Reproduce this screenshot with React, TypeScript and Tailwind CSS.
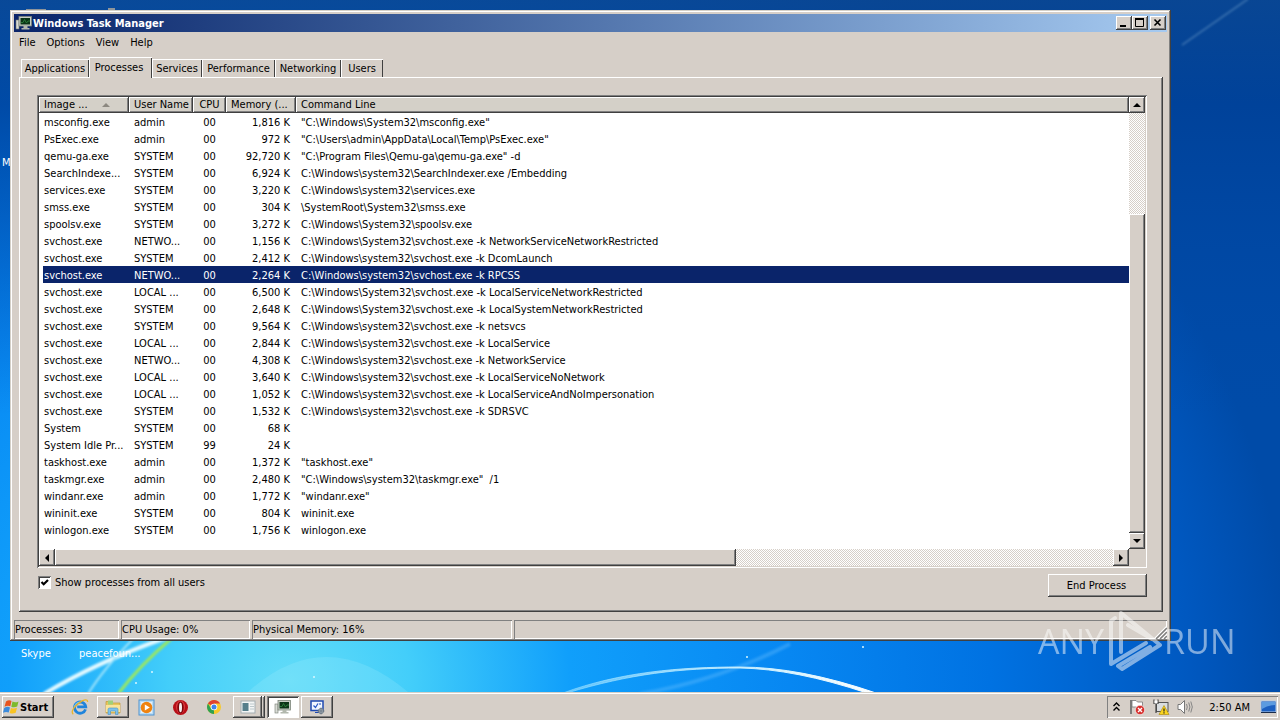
import { useState } from 'react';
import type { ReactNode } from 'react';

const raised = 'shadow-[inset_-1px_-1px_#404040,inset_1px_1px_#fff,inset_-2px_-2px_#808080]';
const sunken = 'shadow-[inset_1px_1px_#808080,inset_-1px_-1px_#fff,inset_2px_2px_#404040]';
const thinSunken = 'shadow-[inset_1px_1px_#808080,inset_-1px_-1px_#fff]';
const dither = 'bg-[repeating-conic-gradient(#ffffff_0_25%,#d6cfc8_0_50%)] bg-[length:2px_2px]';

const menus = ['File', 'Options', 'View', 'Help'];

const tabs = [
  { name: 'Applications', width: 'w-[68px]' },
  { name: 'Processes', width: 'w-[63px]' },
  { name: 'Services', width: 'w-[50px]' },
  { name: 'Performance', width: 'w-[73px]' },
  { name: 'Networking', width: 'w-[66px]' },
  { name: 'Users', width: 'w-[42px]' },
];

const processes = [
  ['msconfig.exe', 'admin', '00', '1,816 K', '"C:\\Windows\\System32\\msconfig.exe"'],
  ['PsExec.exe', 'admin', '00', '972 K', '"C:\\Users\\admin\\AppData\\Local\\Temp\\PsExec.exe"'],
  ['qemu-ga.exe', 'SYSTEM', '00', '92,720 K', '"C:\\Program Files\\Qemu-ga\\qemu-ga.exe" -d'],
  ['SearchIndexe...', 'SYSTEM', '00', '6,924 K', 'C:\\Windows\\system32\\SearchIndexer.exe /Embedding'],
  ['services.exe', 'SYSTEM', '00', '3,220 K', 'C:\\Windows\\system32\\services.exe'],
  ['smss.exe', 'SYSTEM', '00', '304 K', '\\SystemRoot\\System32\\smss.exe'],
  ['spoolsv.exe', 'SYSTEM', '00', '3,272 K', 'C:\\Windows\\System32\\spoolsv.exe'],
  ['svchost.exe', 'NETWO...', '00', '1,156 K', 'C:\\Windows\\System32\\svchost.exe -k NetworkServiceNetworkRestricted'],
  ['svchost.exe', 'SYSTEM', '00', '2,412 K', 'C:\\Windows\\system32\\svchost.exe -k DcomLaunch'],
  ['svchost.exe', 'NETWO...', '00', '2,264 K', 'C:\\Windows\\system32\\svchost.exe -k RPCSS'],
  ['svchost.exe', 'LOCAL ...', '00', '6,500 K', 'C:\\Windows\\System32\\svchost.exe -k LocalServiceNetworkRestricted'],
  ['svchost.exe', 'SYSTEM', '00', '2,648 K', 'C:\\Windows\\System32\\svchost.exe -k LocalSystemNetworkRestricted'],
  ['svchost.exe', 'SYSTEM', '00', '9,564 K', 'C:\\Windows\\system32\\svchost.exe -k netsvcs'],
  ['svchost.exe', 'LOCAL ...', '00', '2,844 K', 'C:\\Windows\\system32\\svchost.exe -k LocalService'],
  ['svchost.exe', 'NETWO...', '00', '4,308 K', 'C:\\Windows\\system32\\svchost.exe -k NetworkService'],
  ['svchost.exe', 'LOCAL ...', '00', '3,640 K', 'C:\\Windows\\system32\\svchost.exe -k LocalServiceNoNetwork'],
  ['svchost.exe', 'LOCAL ...', '00', '1,052 K', 'C:\\Windows\\system32\\svchost.exe -k LocalServiceAndNoImpersonation'],
  ['svchost.exe', 'SYSTEM', '00', '1,532 K', 'C:\\Windows\\system32\\svchost.exe -k SDRSVC'],
  ['System', 'SYSTEM', '00', '68 K', ''],
  ['System Idle Pr...', 'SYSTEM', '99', '24 K', ''],
  ['taskhost.exe', 'admin', '00', '1,372 K', '"taskhost.exe"'],
  ['taskmgr.exe', 'admin', '00', '2,480 K', '"C:\\Windows\\system32\\taskmgr.exe"  /1'],
  ['windanr.exe', 'admin', '00', '1,772 K', '"windanr.exe"'],
  ['wininit.exe', 'SYSTEM', '00', '804 K', 'wininit.exe'],
  ['winlogon.exe', 'SYSTEM', '00', '1,756 K', 'winlogon.exe'],
];

function Wallpaper() {
  return (
    <svg
      className="absolute inset-0 h-full w-full"
      viewBox="0 0 1280 692"
      preserveAspectRatio="none"
      aria-hidden="true"
    >
      <defs>
        <radialGradient id="glow" gradientUnits="userSpaceOnUse" cx="0" cy="0" r="1000" gradientTransform="translate(290 680) scale(1 0.85)">
          <stop offset="0" stopColor="#62dcf8" />
          <stop offset="0.12" stopColor="#43cefa" />
          <stop offset="0.28" stopColor="#109ffb" />
          <stop offset="0.5" stopColor="#0787f2" />
          <stop offset="0.7" stopColor="#0072e2" />
          <stop offset="0.9" stopColor="#0058c0" />
          <stop offset="1" stopColor="#004ba8" />
        </radialGradient>
        <linearGradient id="dusk" x1="0" y1="0" x2="0" y2="1">
          <stop offset="0" stopColor="#0a4590" stopOpacity="0.85" />
          <stop offset="0.15" stopColor="#003f95" stopOpacity="0.75" />
          <stop offset="0.6" stopColor="#0048a8" stopOpacity="0" />
        </linearGradient>
        <linearGradient id="arc" x1="560" y1="0" x2="880" y2="0" gradientUnits="userSpaceOnUse">
          <stop offset="0" stopColor="#8fdcff" stopOpacity="0.6" />
          <stop offset="0.7" stopColor="#d8f4ff" />
          <stop offset="1" stopColor="#ffffff" />
        </linearGradient>
        <filter id="soft">
          <feGaussianBlur stdDeviation="1" />
        </filter>
      </defs>
      <rect width="1280" height="692" fill="url(#glow)" />
      <rect width="1280" height="692" fill="url(#dusk)" />
      <path d="M248 692 Q325 622 408 692Z" fill="#b8f2ff" fillOpacity="0.18" />
      <g fill="#c9b79a" fillOpacity="0.7">
        <rect x="26" y="9" width="20" height="2" />
        <rect x="108" y="8" width="7" height="3" />
      </g>
      <g filter="url(#soft)" fill="none">
        <path d="M1182 45 L1248 -1" stroke="#7aa7d0" strokeOpacity="0.4" strokeWidth="2" />
        <path d="M44 694 Q95 663 165 638" stroke="#e2f9ff" strokeWidth="4" />
        <path d="M88 694 Q104 668 134 638" stroke="#9fe4fb" strokeWidth="2" />
        <path d="M118 694 Q140 665 172 638" stroke="#9be860" strokeWidth="3" />
        <path d="M640 694 Q720 680 790 644" stroke="#6fc3ff" strokeOpacity="0.35" strokeWidth="4" />
      </g>
      <path d="M563 693 C620 672 680 667 740 667 Q800 667 876 693 L867 693 Q795 669 740 668 C680 668 630 674 567 693Z" fill="url(#arc)" stroke="url(#arc)" />
      <g fill="#d9f7ff">
        <circle cx="136" cy="683" r="1" />
        <circle cx="152" cy="672" r="1" />
        <circle cx="314" cy="677" r="1" />
        <circle cx="747" cy="657" r="1" />
        <circle cx="863" cy="647" r="1" />
      </g>
    </svg>
  );
}

function TaskManagerIcon() {
  return (
    <svg width="18" height="16" viewBox="0 0 18 16" aria-hidden="true">
      <rect x="1" y="5" width="3" height="9" fill="#d9dcd6" stroke="#73796f" strokeWidth="0.6" />
      <rect x="4" y="1.5" width="12.5" height="9.5" fill="#c9cfc6" stroke="#7c8479" strokeWidth="0.8" />
      <rect x="5.5" y="3" width="9.5" height="6.5" fill="#0b3517" />
      <path d="M6 7.5h2l1.500-3 2 3.500 1.500-2h2" stroke="#2c7f3c" strokeWidth="0.9" fill="none" />
      <path d="M8.500 11h4v2h2v1.500h-8V13h2z" fill="#b2b8ad" />
    </svg>
  );
}

function StartLogo() {
  return (
    <svg width="17" height="16" viewBox="0 0 17 16" aria-hidden="true">
      <path d="M3 2.500Q6 .5 8.500 2L7.300 7.200Q4.500 6 1.500 7.800Z" fill="#e8541f" />
      <path d="M9.500 2.600Q12.500 4 15.500 2.400L14.200 7.500Q11 9 8.300 7.700Z" fill="#7dba2c" />
      <path d="M1.200 8.900Q4.300 7 7 8.400L5.700 13.500Q3 12.200 0 13.800Z" fill="#3c8bdc" />
      <path d="M8 8.900Q11 10.200 14 8.700L12.700 13.800Q9.500 15.200 6.700 13.900Z" fill="#f8c322" />
    </svg>
  );
}

function ExplorerLogo() {
  return (
    <svg width="18" height="18" viewBox="0 0 18 18" aria-hidden="true">
      <path d="M14.500 11.300A5.600 5.600 0 1 1 14.700 8.800H6.200" fill="none" stroke="#1f84dc" strokeWidth="2.8" />
      <path d="M3.400 10A5.600 5.600 0 0 1 9 4.200" fill="none" stroke="#6cc4f8" strokeWidth="1.2" />
      <path d="M2.300 16.200C-.8 13.800 3.500 8 8.500 4.600 12.600 1.800 17 .6 16.500 4" fill="none" stroke="#e9b52c" strokeWidth="1.3" />
    </svg>
  );
}

function FolderIcon() {
  return (
    <svg width="18" height="18" viewBox="0 0 18 18" aria-hidden="true">
      <path d="M2 3.500h5l1 1.500h8v10H2z" fill="#e8c65c" stroke="#c49a35" strokeWidth="0.7" />
      <path d="M4 2.500h5v4H4z" fill="#9fd07a" />
      <path d="M2 7h14v7H2z" fill="#fae49a" />
      <path d="M4 16.500v-5q0-1.500 1.500-1.500h7q1.500 0 1.500 1.500v5h-2.500V13h-5v3.500z" fill="#7dc1ea" stroke="#4790c4" strokeWidth="0.6" />
    </svg>
  );
}

function MediaPlayerIcon() {
  return (
    <svg width="17" height="17" viewBox="0 0 17 17" aria-hidden="true">
      <rect x="1" y="1" width="15" height="15" fill="#b9dcf5" stroke="#4f93cf" />
      <rect x="3" y="3" width="11" height="11" fill="#e3f1fb" />
      <circle cx="8.5" cy="8.5" r="5.8" fill="#ef8310" />
      <path d="M6.800 5.400v6.200l5-3.100z" fill="#fff" />
    </svg>
  );
}

function OperaIcon() {
  return (
    <svg width="17" height="17" viewBox="0 0 17 17" aria-hidden="true">
      <circle cx="8.5" cy="8.5" r="7.5" fill="#b80f17" />
      <ellipse cx="8.5" cy="8" rx="4.6" ry="6.4" fill="#d8383c" />
      <ellipse cx="8.5" cy="8.5" rx="3.2" ry="6" fill="#7d060b" />
      <ellipse cx="8.5" cy="8.5" rx="1.5" ry="4.8" fill="#f4eeee" />
    </svg>
  );
}

function ChromeIcon() {
  return (
    <svg width="16" height="16" viewBox="0 0 16 16" aria-hidden="true">
      <circle cx="8" cy="8" r="7" fill="#f7c92b" />
      <path d="M8 8L1.940 4.500A7 7 0 0 1 14.060 4.500H8Z" fill="#e0402f" />
      <path d="M8 8L8 15A7 7 0 0 1 1.940 4.500L5 9.500Z" fill="#2fa150" />
      <circle cx="8" cy="8" r="3.3" fill="#fff" />
      <circle cx="8" cy="8" r="2.5" fill="#3f84ea" />
    </svg>
  );
}

function PanelIcon() {
  return (
    <svg width="16" height="14" viewBox="0 0 16 14" aria-hidden="true">
      <rect x="1" y="1" width="14" height="12" fill="#f3f5f5" stroke="#a3adb1" />
      <rect x="2.5" y="3" width="6" height="8" fill="#567f8c" />
      <path d="M10 4h4M10 6.500h4M10 9h4" stroke="#bcc8cc" />
    </svg>
  );
}

function ConfigIcon() {
  return (
    <svg width="17" height="17" viewBox="0 0 17 17" aria-hidden="true">
      <rect x="2" y="2" width="12" height="9.5" fill="#f2f7ff" stroke="#1e49b0" strokeWidth="1.5" />
      <path d="M4.500 6.500l2 2 2.500-4" fill="none" stroke="#2756c4" strokeWidth="1.2" />
      <path d="M10 5h2M6 13.500h4" stroke="#1e49b0" />
      <circle cx="12" cy="12" r="2.6" fill="#aab4bd" stroke="#66727e" strokeWidth="0.8" />
      <path d="M12 8.500v7M8.500 12h7" stroke="#66727e" strokeWidth="0.8" />
    </svg>
  );
}

function TrayFlag() {
  return (
    <svg width="18" height="18" viewBox="0 0 18 18" aria-hidden="true">
      <path d="M3 2v14" stroke="#666" strokeWidth="1.6" />
      <path d="M4 2.500h4l1.500 1.500h5v6h-5L8 9H4z" fill="#fff" stroke="#777" strokeWidth="0.8" />
      <circle cx="12" cy="12" r="4.7" fill="#d6302d" stroke="#fff" strokeWidth="0.6" />
      <path d="M10 10l4 4M14 10l-4 4" stroke="#fff" strokeWidth="1.4" />
    </svg>
  );
}

function TrayNetwork() {
  return (
    <svg width="18" height="18" viewBox="0 0 18 18" aria-hidden="true">
      <rect x="4.5" y="4.5" width="11.5" height="9" fill="#d9dde0" stroke="#555" />
      <path d="M2 1.500v4h4v-4M4 5.500V15" fill="none" stroke="#444" strokeWidth="1.2" />
      <rect x="2.5" y="2.5" width="3" height="3" fill="#fff" />
      <path d="M12 7.500l5 9H7z" fill="#fbd51f" stroke="#a98500" strokeWidth="0.6" />
      <path d="M12 10.500v3M12 14.300v1.200" stroke="#222" strokeWidth="1.2" />
    </svg>
  );
}

function TraySpeaker() {
  return (
    <svg width="18" height="18" viewBox="0 0 18 18" aria-hidden="true">
      <path d="M2 6.500h2.500l4-4v13l-4-4H2z" fill="#fff" stroke="#777" />
      <path d="M10.500 6q1.500 3 0 6M12.700 4.500q2.500 4.500 0 9M14.800 3.500q3 5.500 0 11" fill="none" stroke="#858585" />
    </svg>
  );
}

function ScrollArrow({ label, d, className }: { label: string; d: string; className: string }) {
  return (
    <button aria-label={label} className={`flex shrink-0 items-center justify-center bg-[#d6cfc8] ${raised} ${className}`}>
      <svg width="8" height="8" viewBox="0 0 8 8" aria-hidden="true">
        <path d={d} fill="#000" />
      </svg>
    </button>
  );
}

function TitleButton({ label, children }: { label: string; children: ReactNode }) {
  return (
    <button aria-label={label} className={`flex h-[14px] w-4 items-center justify-center bg-[#d6cfc8] ${raised}`}>
      <svg width="12" height="10" viewBox="0 0 12 10" fill="none" stroke="#000" aria-hidden="true">
        {children}
      </svg>
    </button>
  );
}

function ProcessTable() {
  const [selected, setSelected] = useState(9);
  const th = `h-4 p-0 px-[5px] bg-[#d4d0c8] font-normal leading-4 ${raised}`;

  return (
    <table className="w-full table-fixed border-separate border-spacing-0 whitespace-pre">
      <colgroup>
        <col className="w-[90px]" />
        <col className="w-16" />
        <col className="w-[33px]" />
        <col className="w-[70px]" />
        <col />
      </colgroup>
      <thead>
        <tr className="text-left">
          <th className={th}>
            <span className="flex items-center gap-[14px]">
              Image ...
              <svg width="8" height="4" viewBox="0 0 8 4" aria-hidden="true">
                <path d="M0 4L4 0l4 4z" fill="#8c8880" />
              </svg>
            </span>
          </th>
          <th className={th}>User Name</th>
          <th className={`${th} text-center`}>CPU</th>
          <th className={th}>Memory (...</th>
          <th className={th}>Command Line</th>
        </tr>
      </thead>
      <tbody>
        {processes.map(([name, user, cpu, memory, command], index) => (
          <tr
            key={index}
            onClick={() => setSelected(index)}
            className={`h-[17px] leading-[15px] ${index === selected ? 'bg-[#0a246a] text-white' : ''}`}
          >
            <td className="border-l-4 border-white p-0 pt-[2px] pl-px">{name}</td>
            <td className="p-0 pt-[2px] pl-[5px]">{user}</td>
            <td className="p-0 pt-[2px] text-center">{cpu}</td>
            <td className="p-0 pt-[2px] pr-[6px] text-right">{memory}</td>
            <td className="p-0 pt-[2px] pl-[5px]">{command}</td>
          </tr>
        ))}
      </tbody>
    </table>
  );
}

function TaskManager() {
  const [activeTab, setActiveTab] = useState('Processes');

  return (
    <section className="relative bg-[#d6cfc8] px-1 pt-1 pb-[2px] text-black shadow-[inset_-1px_-1px_#404040,inset_1px_1px_#d4d0c8,inset_-2px_-2px_#808080,inset_2px_2px_#fff]">
      <header className="flex h-[18px] items-center bg-linear-to-r from-[#0a246a] to-[#a6caf0] pr-px pl-[1px]">
        <TaskManagerIcon />
        <h1 className="flex-1 font-bold text-white">Windows Task Manager</h1>
        <div className="flex">
          <TitleButton label="Minimize">
            <path d="M2 8h6" strokeWidth="2" />
          </TitleButton>
          <TitleButton label="Maximize">
            <path d="M1.500 1v7.500h8V1M1 1.500h9M1 .5h9" />
          </TitleButton>
          <div className="ml-[2px]">
            <TitleButton label="Close">
              <path d="M2.500 1.500l6 6M8.500 1.500l-6 6" strokeWidth="1.6" />
            </TitleButton>
          </div>
        </div>
      </header>

      <nav className="flex h-5 items-center gap-[11px] pl-[5px]">
        {menus.map((menu) => (
          <button key={menu}>{menu}</button>
        ))}
      </nav>

      <div role="tablist" className="flex h-[25px] items-end pl-[7px]">
        {tabs.map((tab) => (
          <button
            key={tab.name}
            role="tab"
            aria-selected={tab.name === activeTab}
            onClick={() => setActiveTab(tab.name)}
            className={`border-t border-l border-white shadow-[inset_-1px_0_#404040] ${tab.width} ${
              tab.name === activeTab ? 'relative z-10 -mb-px h-[21px] bg-[#d6cfc8] pr-1 pb-[2px]' : 'h-[18px] pr-px'
            }`}
          >
            {tab.name}
          </button>
        ))}
      </div>

      <div
        role="tabpanel"
        className="mr-1 ml-[5px] pt-[18px] pr-4 pb-[15px] pl-[18px] shadow-[inset_-1px_-1px_#404040,inset_1px_1px_#fff,inset_-2px_-2px_#808080]"
      >
        <div className={`grid grid-cols-[1fr_16px] grid-rows-[452px_17px] p-[2px] ${sunken}`}>
          <div className="overflow-hidden bg-white">
            <ProcessTable />
          </div>
          <div className={`flex flex-col ${dither}`}>
            <ScrollArrow label="Scroll up" d="M0 6l4-4 4 4z" className="h-4" />
            <div className="h-[101px]" />
            <div className={`flex-1 bg-[#d6cfc8] ${raised}`} />
            <ScrollArrow label="Scroll down" d="M0 2l4 4 4-4z" className="h-4" />
          </div>
          <div className={`flex ${dither}`}>
            <ScrollArrow label="Scroll left" d="M6 0L2 4l4 4z" className="w-4" />
            <div className={`w-5/8 bg-[#d6cfc8] ${raised}`} />
            <div className="flex-1" />
            <ScrollArrow label="Scroll right" d="M2 0l4 4-4 4z" className="w-4" />
          </div>
          <div className="bg-[#d6cfc8]" />
        </div>

        <div className="mt-[6px] flex h-[23px] items-center justify-between">
          <label className="flex items-center gap-1 pb-[6px] pl-px">
            <span className={`grid h-[13px] w-[13px] bg-white ${sunken}`}>
              <input type="checkbox" defaultChecked className="peer col-start-1 row-start-1 h-[13px] w-[13px] appearance-none" />
              <svg
                className="pointer-events-none col-start-1 row-start-1 hidden peer-checked:block"
                width="13"
                height="13"
                viewBox="0 0 13 13"
                aria-hidden="true"
              >
                <path d="M3.500 6l2.200 2.300L10 4" fill="none" stroke="#000" strokeWidth="2.2" />
              </svg>
            </span>
            Show processes from all users
          </label>
          <button className={`h-[23px] w-[99px] pr-[2px] ${raised}`}>End Process</button>
        </div>
      </div>

      <footer className="mt-2 flex h-[19px] gap-[2px] leading-[19px]">
        <span className={`w-[105px] pl-px ${thinSunken}`}>Processes: 33</span>
        <span className={`w-[129px] pl-px ${thinSunken}`}>CPU Usage: 0%</span>
        <span className={`w-[260px] pl-px ${thinSunken}`}>Physical Memory: 16%</span>
        <span className={`flex flex-1 items-end justify-end ${thinSunken}`}>
          <svg width="13" height="13" viewBox="0 0 13 13" aria-hidden="true">
            <path d="M0 13L13 0M4 13l9-9M8 13l5-5" stroke="#fff" strokeWidth="1.2" />
            <path d="M2 13L13 2M6 13l7-7M10 13l3-3" stroke="#808080" strokeWidth="1.5" />
          </svg>
        </span>
      </footer>
    </section>
  );
}

function Watermark() {
  return (
    <div className="pointer-events-none absolute right-12 bottom-[47px] z-20 flex h-16 w-[194px] items-center justify-between font-['Open_Sans',sans-serif] text-[34px] leading-none text-white opacity-50">
      <span>ANY</span>
      <svg
        className="shrink-0"
        width="60"
        height="64"
        viewBox="0 0 60 64"
        fill="none"
        stroke="#fff"
        strokeWidth="4"
        strokeLinejoin="round"
        strokeLinecap="round"
        aria-hidden="true"
      >
        <path d="M11 9L7 12V55L42 34" />
        <path d="M17 43V4L56 36L18 60L14 57L46 38" />
        <path d="M24 16L48 30" />
      </svg>
      <span>RUN</span>
    </div>
  );
}

function TaskbarButton({ label, active, children }: { label: string; active?: boolean; children: ReactNode }) {
  return (
    <button
      aria-label={label}
      className={`flex h-[22px] w-8 items-center justify-center ${active ? `bg-white ${sunken}` : raised}`}
    >
      {children}
    </button>
  );
}

function QuickLaunch({ label, children }: { label: string; children: ReactNode }) {
  return (
    <button aria-label={label} className="flex w-[34px] items-center justify-center">
      {children}
    </button>
  );
}

function Taskbar() {
  return (
    <footer className="relative flex h-7 items-center bg-[#d6cfc8] px-[2px] pt-[2px] text-black shadow-[inset_0_1px_#d4d0c8,inset_0_2px_#fff]">
      <button className={`mr-[9px] flex h-[22px] w-[52px] items-center pl-px font-bold ${raised}`}>
        <StartLogo />
        Start
      </button>
      <QuickLaunch label="Internet Explorer">
        <ExplorerLogo />
      </QuickLaunch>
      <TaskbarButton label="Windows Explorer">
        <FolderIcon />
      </TaskbarButton>
      <QuickLaunch label="Windows Media Player">
        <MediaPlayerIcon />
      </QuickLaunch>
      <QuickLaunch label="Opera">
        <OperaIcon />
      </QuickLaunch>
      <QuickLaunch label="Google Chrome">
        <ChromeIcon />
      </QuickLaunch>
      <div className={`mr-[2px] ml-[2px] flex pr-[3px] ${raised}`}>
        <button aria-label="Open windows" className={`flex h-[22px] w-[29px] items-center justify-center ${raised}`}>
          <PanelIcon />
        </button>
      </div>
      <div className="flex gap-[2px]">
        <TaskbarButton label="Windows Task Manager" active>
          <TaskManagerIcon />
        </TaskbarButton>
        <TaskbarButton label="System Configuration">
          <ConfigIcon />
        </TaskbarButton>
      </div>
      <div className={`ml-auto flex h-[22px] items-center pr-px pl-[6px] ${thinSunken}`}>
        <svg width="7" height="10" viewBox="0 0 7 10" fill="none" stroke="#000" strokeWidth="1.4" aria-hidden="true">
          <path d="M.5 4l3-3 3 3M.5 8.500l3-3 3 3" />
        </svg>
        <div className="mr-[15px] ml-2 flex gap-[6px]">
          <TrayFlag />
          <TrayNetwork />
          <TraySpeaker />
        </div>
        <time className="mr-[10px]">2:50 AM</time>
        <svg width="17" height="14" viewBox="0 0 17 14" aria-hidden="true">
          <rect x="1" y="1" width="15" height="11" fill="#1c5fc0" stroke="#b7cde6" />
          <path d="M2 2h13v3Q8 5 2 9z" fill="#5c9be0" />
          <path d="M1 12.500h15" stroke="#1a2c4c" />
        </svg>
      </div>
    </footer>
  );
}

export default function App() {
  return (
    <div className="relative flex min-h-screen flex-col overflow-hidden font-['DejaVu_Sans_Condensed','DejaVu_Sans',sans-serif] text-[11px] leading-[15px] text-white">
      <main className="relative flex-1 pt-[10px] pr-[109px] pl-[10px]">
        <Wallpaper />
        <span className="absolute top-[155px] left-[2px]">M</span>
        <TaskManager />
        <div className="relative flex pt-[5px] pl-[11px]">
          <span className="w-[58px]">Skype</span>
          <span>peacefoun...</span>
        </div>
      </main>
      <Taskbar />
      <Watermark />
    </div>
  );
}
